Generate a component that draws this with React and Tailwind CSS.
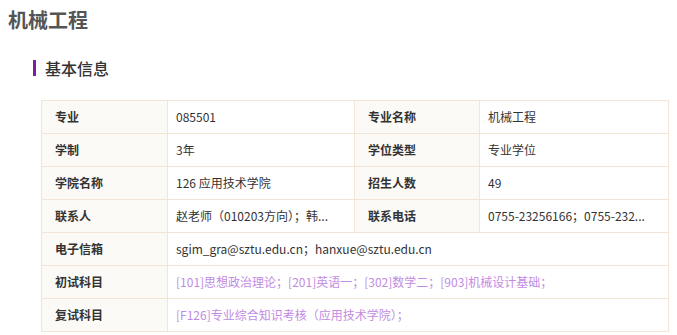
const rows = [
  [
    { label: '专业', value: '085501' },
    { label: '专业名称', value: '机械工程' },
  ],
  [
    { label: '学制', value: '3年' },
    { label: '学位类型', value: '专业学位' },
  ],
  [
    { label: '学院名称', value: '126 应用技术学院' },
    { label: '招生人数', value: '49' },
  ],
  [
    { label: '联系人', value: '赵老师（010203方向）；韩...' },
    { label: '联系电话', value: '0755-23256166；0755-232...' },
  ],
]

const wide = [
  { label: '电子信箱', value: 'sgim_gra@sztu.edu.cn；hanxue@sztu.edu.cn' },
  { label: '初试科目', value: '[101]思想政治理论；[201]英语一；[302]数学二；[903]机械设计基础；', link: true },
  { label: '复试科目', value: '[F126]专业综合知识考核（应用技术学院）；', link: true },
]

const cell = 'h-[33px] border border-[#f3e5d6] text-[12px] align-middle whitespace-nowrap'
const labelCell = `${cell} bg-[#fcfaf7] pl-[13px] font-bold text-[#333]`
const valueCell = `${cell} pl-2 text-[#333]`

export default function App() {
  return (
    <div className="w-[677px] h-[335px] bg-white overflow-hidden font-['Noto_Sans_CJK_SC','Noto_Sans',sans-serif]">
      <h1 className="pl-2 pt-[7px] text-[20px] leading-[26px] font-bold text-[#555]">机械工程</h1>
      <div className="mt-[24px] ml-[33px] flex items-center gap-[9px]">
        <span className="w-[3px] h-4 bg-[#7b1fa2]" />
        <h2 className="text-[16px] leading-[22px] font-medium text-[#333]">基本信息</h2>
      </div>
      <table className="mt-[21px] ml-[41px] w-[627px] table-fixed border-collapse">
        <colgroup>
          <col className="w-[126px]" />
          <col className="w-[187px]" />
          <col className="w-[125px]" />
          <col className="w-[189px]" />
        </colgroup>
        <tbody>
          {rows.map((r, i) => (
            <tr key={i}>
              {r.flatMap((c) => [
                <td key={c.label} className={labelCell}>{c.label}</td>,
                <td key={c.label + '-v'} className={valueCell}>{c.value}</td>,
              ])}
            </tr>
          ))}
          {wide.map((c) => (
            <tr key={c.label}>
              <td className={labelCell}>{c.label}</td>
              <td colSpan={3} className={`${valueCell} ${c.link ? 'text-[#c28be3]' : ''}`}>{c.value}</td>
            </tr>
          ))}
        </tbody>
      </table>
    </div>
  )
}
